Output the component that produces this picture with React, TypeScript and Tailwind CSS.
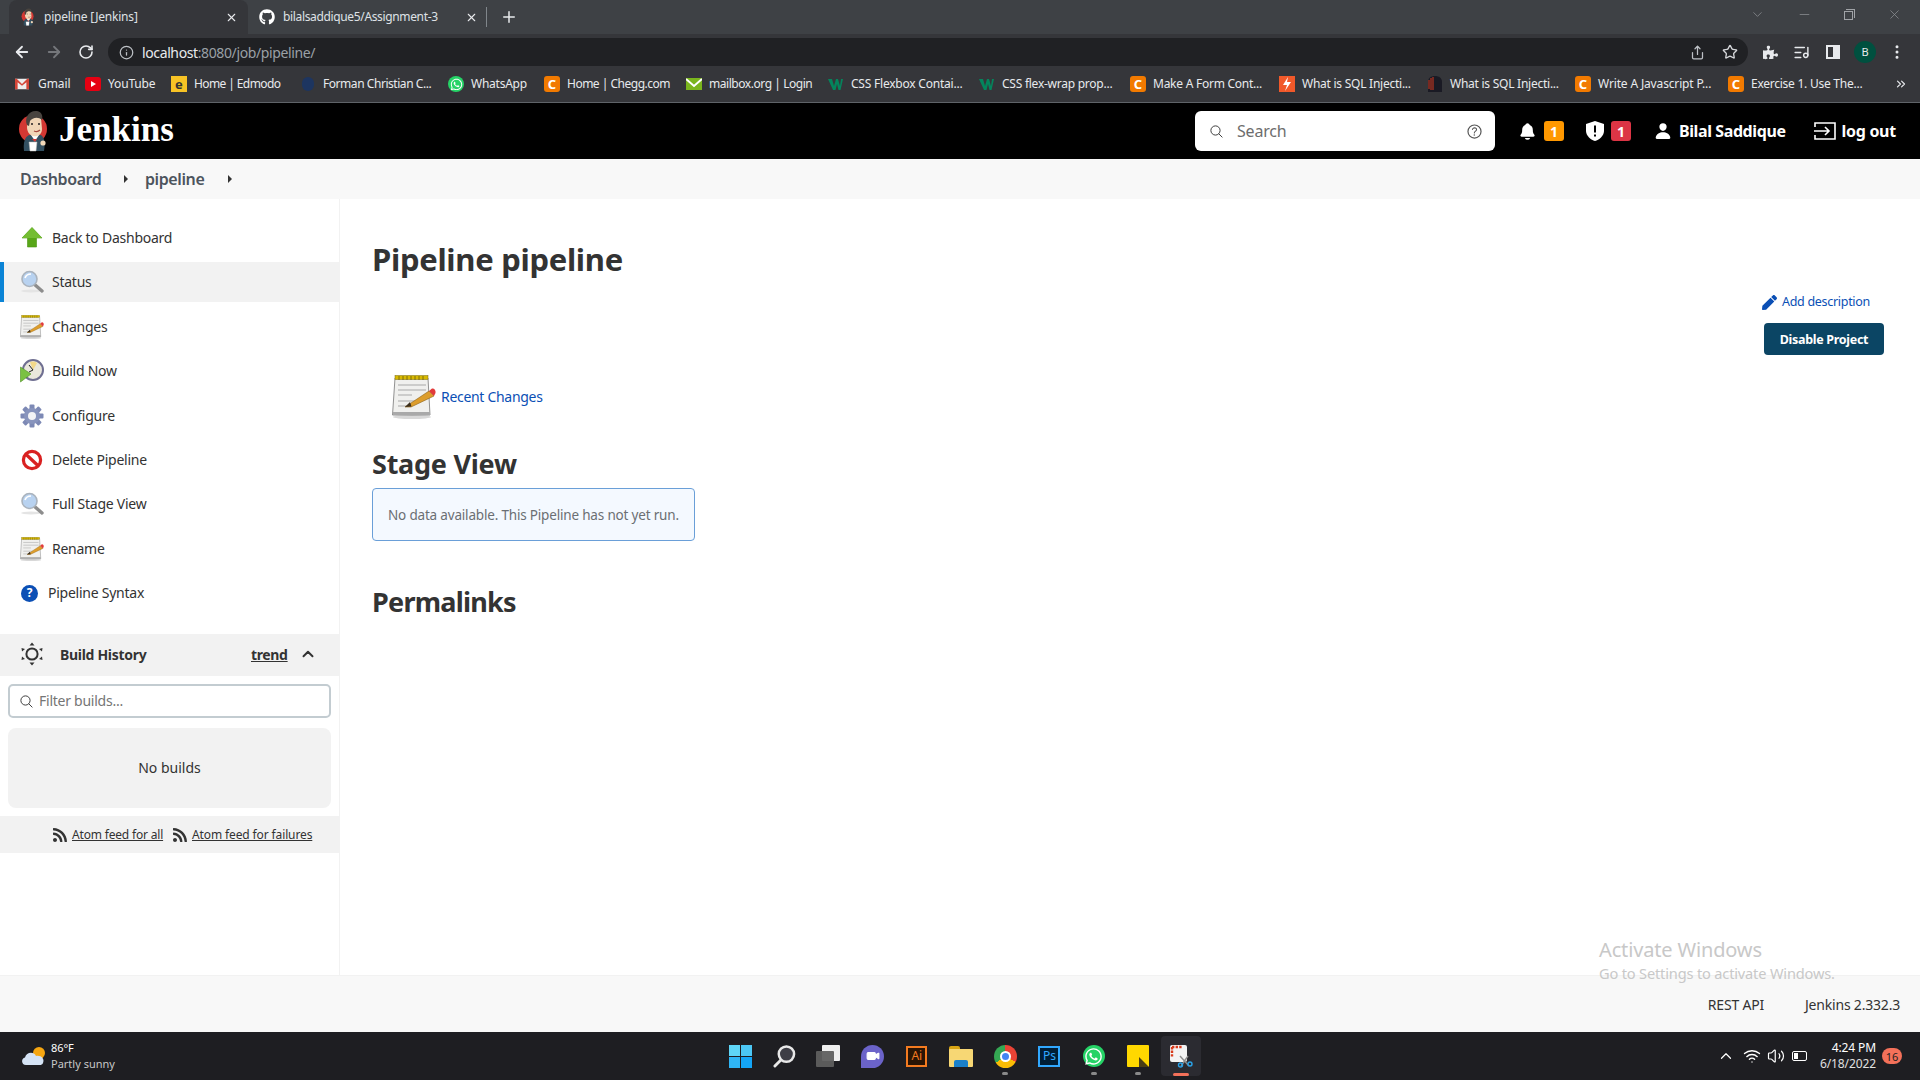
import React from 'react'
import { ArrowLeft, ArrowRight, RotateCw, Info, Share, Star, ListMusic, MoreVertical, X, Plus, ChevronDown, Minus, ChevronUp, Wifi, Volume2, ChevronsRight, Video } from 'lucide-react'
import { IoNotifications, IoPerson, IoSearchOutline, IoHelpCircleOutline } from 'react-icons/io5'
import { FaRss, FaGithub, FaPen, FaWhatsapp, FaPuzzlePiece } from 'react-icons/fa'

function JenkinsLogo({ className }: { className: string }) {
  return (
    <svg viewBox="0 0 32 42" className={className}>
      <circle cx="15" cy="19" r="14" fill="#d33833" />
      <path d="M6 41 C5 32 7 27 11 25 L23 25 C27 28 27 34 26 41 Z" fill="#335061" />
      <path d="M13 25 L17 31 L21 25 Z" fill="#fff" />
      <path d="M14 29 L19 29 L17 32 Z" fill="#d33833" />
      <path d="M10 9 C10 3 21 1 23 8 L24 19 C24 25 19 27 15 26 C11 25 9 21 9 17 Z" fill="#f0d6b7" />
      <path d="M9 15 C6 8 11 0 19 1 C24 2 25 6 24 10 C20 6 14 8 12 11 L11 16 Z" fill="#49443f" />
      <circle cx="14" cy="14" r="1" fill="#231f20" />
      <circle cx="21" cy="14" r="1" fill="#231f20" />
      <path d="M16 21 C18 22 20 22 22 20" stroke="#a5473e" strokeWidth="1.2" fill="none" />
      <path d="M11 32 L19 32 L18 41 L12 41 Z" fill="#fff" stroke="#b9b9b9" strokeWidth="0.5" />
      <circle cx="25" cy="33" r="2.6" fill="#f0d6b7" />
    </svg>
  )
}

function Notepad({ className }: { className: string }) {
  return (
    <svg viewBox="0 0 44 44" className={className}>
      <ellipse cx="20" cy="42" rx="19" ry="2" fill="#d8d8d8" />
      <path d="M3 3 H36 L38 40 H0.5 Z" fill="#f0f0ee" stroke="#777" strokeWidth="0.8" />
      <path d="M0.8 37 H38 V40 H0.8 Z" fill="#a9a9a9" />
      <rect x="3" y="0.5" width="33" height="4" fill="#d8b900" stroke="#7a6a10" strokeWidth="0.5" />
      <path d="M7 1V5M11 1V5M15 1V5M19 1V5M23 1V5M27 1V5M31 1V5" stroke="#6a5b08" strokeWidth="0.8" />
      <path d="M6 10H34M6 15H34M6 20H20M6 26H24M6 31H18" stroke="#a8a8a8" strokeWidth="1" />
      <path d="M13 32 L37 16 L42 21 L19 32 Z" fill="#dd9d2c" stroke="#8c5f14" strokeWidth="0.6" />
      <path d="M13 32 L18 27 L19.5 31.5 Z" fill="#3b2f1f" />
      <path d="M37 16 L40 13.5 C42 13 44 15 43.5 18 L42 21 Z" fill="#e23b3b" />
    </svg>
  )
}

function Magnifier() {
  return (
    <svg viewBox="0 0 24 24" className="h-[24px] w-[24px]">
      <ellipse cx="11" cy="21" rx="10" ry="1.5" fill="#e4e4e4" />
      <path d="M14 14 L22 21" stroke="#8d8d8d" strokeWidth="3.4" strokeLinecap="round" />
      <circle cx="9.5" cy="9" r="7.5" fill="#b8d2f0" stroke="#aab3bd" strokeWidth="1.6" />
      <path d="M5 8 C6 5 9 4 11 4" stroke="#fff" strokeWidth="1.6" fill="none" />
    </svg>
  )
}

function ClockPlay() {
  return (
    <svg viewBox="0 0 24 24" className="h-[24px] w-[24px]">
      <circle cx="13" cy="11" r="10" fill="#e9e7dc" stroke="#6f6f91" strokeWidth="2" />
      <path d="M13 11 L10 3 A8 8 0 0 1 17 4 Z" fill="#f3d98a" />
      <path d="M13 11 L9 6 M13 11 L9 13" stroke="#222" strokeWidth="1" />
      <path d="M0.5 8 L11 15 L0.5 23 Z" fill="#7ac142" stroke="#4e8f24" strokeWidth="0.6" />
    </svg>
  )
}

function Gear() {
  const angles = [0, 45, 90, 135, 180, 225, 270, 315]
  return (
    <svg viewBox="0 0 24 24" className="h-[24px] w-[24px]">
      {angles.map((a) => (
        <rect key={a} x="9.5" y="0.5" width="5" height="6" rx="1" fill="#7d89b5" transform={`rotate(${a} 12 12)`} />
      ))}
      <circle cx="12" cy="12" r="8" fill="#8894bd" />
      <circle cx="12" cy="12" r="4" fill="#f4f4f6" />
    </svg>
  )
}

function NoSign() {
  return (
    <svg viewBox="0 0 24 24" className="h-[24px] w-[24px]">
      <circle cx="12" cy="12" r="8.6" fill="#fff" stroke="#d92121" strokeWidth="3.2" />
      <path d="M5.6 6 L18.4 18" stroke="#d92121" strokeWidth="3.2" />
    </svg>
  )
}

function GreenUp() {
  return (
    <svg viewBox="0 0 24 24" className="h-[24px] w-[24px]">
      <path d="M12 1.5 L22 12 L16.5 12 L16.5 21 L7.5 21 L7.5 12 L2 12 Z" fill="#58a618" stroke="#4c9412" strokeWidth="0.6" />
      <path d="M12 1.5 L22 12 L2 12 Z" fill="#74bd33" />
    </svg>
  )
}

function BuildHistoryIcon() {
  return (
    <svg viewBox="0 0 24 24" className="h-[24px] w-[24px]">
      <circle cx="12" cy="12" r="5.6" fill="none" stroke="#333" strokeWidth="2" />
      <path d="M12 0.5 L14.5 3.5 H9.5 Z M12 23.5 L14.5 20.5 H9.5 Z M1.5 6 L5 7 L2 9.5 Z M22.5 6 L19 7 L22 9.5 Z M1.5 18 L5 17 L2 14.5 Z M22.5 18 L19 17 L22 14.5 Z" fill="#333" />
    </svg>
  )
}

const menu = [
  { label: 'Back to Dashboard', icon: <GreenUp /> },
  { label: 'Status', icon: <Magnifier />, active: true },
  { label: 'Changes', icon: <Notepad className="h-[24px] w-[24px]" /> },
  { label: 'Build Now', icon: <ClockPlay /> },
  { label: 'Configure', icon: <Gear /> },
  { label: 'Delete Pipeline', icon: <NoSign /> },
  { label: 'Full Stage View', icon: <Magnifier /> },
  { label: 'Rename', icon: <Notepad className="h-[24px] w-[24px]" /> },
]

function OrangeC() {
  return <span className="flex h-[16px] w-[16px] items-center justify-center rounded-[3px] bg-[#f27a00] text-[13px] leading-none font-bold text-white">C</span>
}

function W3() {
  return (
    <svg viewBox="0 0 16 16" className="h-[16px] w-[16px]">
      <path d="M0 3 H4 L6 10 L8 3 H10 L12 10 L13 3 H15 L12.5 14 H10.5 L9 8 L7.5 14 H5 Z" fill="#04845c" />
    </svg>
  )
}

const bookmarks = [
  {
    label: 'Gmail', w: 'w-[70px]', t: 'tracking-[-0.1px]', icon: (
      <svg viewBox="0 0 16 16" className="h-[14px] w-[14px]">
        <rect y="2" width="16" height="12" fill="#eee" />
        <path d="M0 2 H2 L8 8 L14 2 H16 V14 H13 V6 L8 10 L3 6 V14 H0 Z" fill="#d44638" />
      </svg>
    ),
  },
  { label: 'YouTube', w: 'w-[86px]', t: 'tracking-[-0.15px]', icon: <span className="flex h-[14px] w-[16px] items-center justify-center rounded-[3px] bg-[#e60012]"><span className="h-0 w-0 border-y-[3px] border-l-[5px] border-y-transparent border-l-white" /></span> },
  { label: 'Home | Edmodo', w: 'w-[129px]', t: 'tracking-[-0.6px]', icon: <span className="flex h-[16px] w-[16px] items-center justify-center bg-[#f7c325] text-[13px] leading-none font-bold text-[#333]">e</span> },
  { label: 'Forman Christian C...', w: 'w-[148px]', t: 'tracking-[-0.45px]', icon: <span className="ml-[2px] h-[14px] w-[12px] rounded-full bg-[#1d3560]" /> },
  { label: 'WhatsApp', w: 'w-[96px]', t: 'tracking-[-0.25px]', icon: <span className="flex h-[16px] w-[16px] items-center justify-center rounded-full bg-[#25d366] text-white"><FaWhatsapp size={13} /></span> },
  { label: 'Home | Chegg.com', w: 'w-[142px]', t: 'tracking-[-0.5px]', icon: <OrangeC /> },
  {
    label: 'mailbox.org | Login', w: 'w-[142px]', t: 'tracking-[-0.45px]', icon: (
      <svg viewBox="0 0 16 16" className="h-[16px] w-[16px]">
        <rect y="2" width="16" height="12" fill="#7ab51d" />
        <path d="M0 3 L8 10 L16 3" stroke="#fff" strokeWidth="2" fill="none" />
      </svg>
    ),
  },
  { label: 'CSS Flexbox Contai...', w: 'w-[151px]', t: 'tracking-[-0.22px]', icon: <W3 /> },
  { label: 'CSS flex-wrap prop...', w: 'w-[151px]', t: 'tracking-[-0.25px]', icon: <W3 /> },
  { label: 'Make A Form Cont...', w: 'w-[149px]', t: 'tracking-[-0.25px]', icon: <OrangeC /> },
  {
    label: 'What is SQL Injecti...', w: 'w-[148px]', t: 'tracking-[-0.25px]', icon: (
      <svg viewBox="0 0 16 16" className="h-[16px] w-[16px]">
        <rect width="16" height="16" fill="#f1592a" />
        <path d="M9 1 L4 9 H8 L6 15 L12 6 H8 Z" fill="#fff" />
      </svg>
    ),
  },
  {
    label: 'What is SQL Injecti...', w: 'w-[148px]', t: 'tracking-[-0.25px]', icon: (
      <svg viewBox="0 0 16 16" className="h-[16px] w-[16px]">
        <path d="M1 16 V6 C1 2 4 0 8 0 C12 0 15 2 15 6 V16 Z" fill="#1a1a24" />
        <path d="M2 4V13M4 2V14M6 1V14" stroke="#d5391f" strokeWidth="1" />
      </svg>
    ),
  },
  { label: 'Write A Javascript P...', w: 'w-[153px]', t: 'tracking-[-0.15px]', icon: <OrangeC /> },
  { label: 'Exercise 1. Use The...', w: 'w-[149px]', t: 'tracking-[-0.25px]', icon: <OrangeC /> },
]

function BrowserChrome() {
  return (
    <div className="bg-[#35363a] text-[#e8eaed]">
      <div className="flex h-[34px] items-center bg-[#3e4145] pl-[9px] text-[12px]">
        <div className="flex h-full w-[239px] items-center rounded-t-lg bg-[#35363a] pl-[12px]">
          <JenkinsLogo className="h-[18px] w-[14px]" />
          <span className="ml-[9px] tracking-[-0.2px] text-[#dfe1e5]">pipeline [Jenkins]</span>
          <X size={13} className="ml-auto mr-[10px]" />
        </div>
        <FaGithub size={16} className="ml-[11px] text-white" />
        <span className="ml-[8px] w-[182px] tracking-[-0.35px] text-[#dfe1e5]">bilalsaddique5/Assignment-3</span>
        <X size={13} />
        <span className="ml-[8px] h-[20px] w-px bg-[#80868b]" />
        <Plus size={18} className="ml-[13px]" />
        <div className="ml-auto mr-[18px] flex items-center gap-[32px] pb-[6px] text-[#8d9094]">
          <ChevronDown size={15} strokeWidth={1.2} />
          <Minus size={15} strokeWidth={1.2} />
          <span className="relative h-[11px] w-[11px]">
            <span className="absolute bottom-0 left-0 h-[9px] w-[9px] border border-[#a0a3a7]" />
            <span className="absolute right-0 top-0 h-[9px] w-[9px] border-t border-r border-[#a0a3a7]" />
          </span>
          <X size={15} strokeWidth={1.2} />
        </div>
      </div>
      <div className="flex h-[32px] items-end">
        <div className="flex h-[28px] w-[108px] items-center pl-[13px]">
          <ArrowLeft size={18} strokeWidth={2.4} />
          <ArrowRight size={18} strokeWidth={2.4} className="ml-[14px] text-[#75777b]" />
          <RotateCw size={16} strokeWidth={2.4} className="ml-[15px]" />
        </div>
        <div className="flex h-[28px] w-[1640px] items-center rounded-full bg-[#202124] pl-[11px] text-[14px]">
          <Info size={15} className="text-[#bdc1c6]" />
          <span className="ml-[8px] tracking-[-0.38px]">localhost<span className="text-[#9aa0a6]">:8080/job/pipeline/</span></span>
          <Share size={15} className="ml-auto text-[#bdc1c6]" />
          <Star size={16} className="ml-[17px] mr-[10px] text-[#d5d7da]" />
        </div>
        <div className="flex h-[28px] flex-1 items-center pl-[15px]">
          <FaPuzzlePiece size={15} className="text-[#e8eaed]" />
          <ListMusic size={17} className="ml-[15px]" />
          <span className="ml-[16px] flex h-[14px] w-[14px] border-2 border-[#e8eaed]"><span className="ml-auto h-full w-[5px] bg-[#e8eaed]" /></span>
          <span className="ml-[14px] flex h-[22px] w-[22px] items-center justify-center rounded-full bg-[#00503f] text-[11px]">B</span>
          <MoreVertical size={18} className="ml-[12px]" />
        </div>
      </div>
      <div className="flex h-[37px] items-center border-b border-[#5f6368] pl-[15px] text-[12px]">
        {bookmarks.map((b, i) => (
          <div key={i} className={`flex shrink-0 items-center ${b.w}`}>
            <span className="flex w-[23px] shrink-0">{b.icon}</span>
            <span className={`whitespace-nowrap ${b.t}`}>{b.label}</span>
          </div>
        ))}
        <ChevronsRight size={14} className="ml-[17px]" />
      </div>
    </div>
  )
}

function JenkinsHeader() {
  return (
    <header className="flex h-[56px] items-center bg-black pl-[18px] text-white">
      <JenkinsLogo className="h-[42px] w-[32px]" />
      <span className="ml-[9px] w-[115px] pb-[3px] font-['Liberation_Serif',serif] text-[35px] leading-none font-bold whitespace-nowrap">Jenkins</span>
      <div className="ml-[1021px] flex h-[40px] w-[300px] items-center rounded-md bg-white pl-[14px] pr-[11px] text-[#6d6d6d]">
        <IoSearchOutline size={15} className="text-[#333]" />
        <span className="ml-[13px] text-[16px] tracking-[-0.2px]">Search</span>
        <IoHelpCircleOutline size={19} className="ml-auto text-[#555]" />
      </div>
      <IoNotifications size={19} className="ml-[23px]" />
      <span className="ml-[7px] flex h-[20px] w-[20px] items-center justify-center rounded-[3px] bg-[#ff9800] text-[14px] font-bold">1</span>
      <svg viewBox="0 0 18 20" className="ml-[22px] h-[20px] w-[18px]">
        <path d="M9 0 L18 3 V10 C18 15 13 19 9 20 C5 19 0 15 0 10 V3 Z" fill="#fff" />
        <path d="M8 4.5 H10 V11.5 H8 Z M8 13.5 H10 V15.5 H8 Z" fill="#000" />
      </svg>
      <span className="ml-[7px] flex h-[20px] w-[20px] items-center justify-center rounded-[3px] bg-[#dc3545] text-[14px] font-bold">1</span>
      <IoPerson size={18} className="ml-[23px]" />
      <span className="ml-[7px] text-[16px] font-bold tracking-[-0.4px] whitespace-nowrap">Bilal Saddique</span>
      <svg viewBox="0 0 22 18" className="ml-[28px] h-[18px] w-[22px]" fill="none" stroke="#fff" strokeWidth="1.6">
        <path d="M1 5 V1 H21 V17 H1 V13" />
        <path d="M0 9 H15 M11 5 L15 9 L11 13" />
      </svg>
      <span className="ml-[6px] text-[16px] font-bold tracking-[-0.3px] whitespace-nowrap">log out</span>
    </header>
  )
}

function Breadcrumb() {
  return (
    <nav className="flex h-[40px] items-center bg-[#f8f8f8] pl-[20px] text-[16px] font-semibold tracking-[-0.4px] text-[#4d545d]">
      <span className="w-[104px]">Dashboard</span>
      <span className="h-0 w-0 border-y-[4px] border-l-[4px] border-y-transparent border-l-[#333]" />
      <span className="ml-[17px] w-[83px]">pipeline</span>
      <span className="h-0 w-0 border-y-[4px] border-l-[4px] border-y-transparent border-l-[#333]" />
    </nav>
  )
}

function Sidebar() {
  return (
    <aside className="w-[340px] shrink-0 border-r border-[#f2f2f2] pt-[19px] text-[14px] text-[#333]">
      <div className="flex flex-col gap-[4.4px]">
        {menu.map((m) => (
          <div key={m.label} className={`flex h-[40px] items-center ${m.active ? 'border-l-4 border-[#0b84d6] bg-[#f2f2f2] pl-[16px]' : 'pl-[20px]'}`}>
            <span className="w-[32px] shrink-0">{m.icon}</span>
            <span className="pb-px tracking-[-0.25px]">{m.label}</span>
          </div>
        ))}
        <div className="flex h-[40px] items-center pl-[21px]">
          <span className="flex h-[17px] w-[17px] items-center justify-center rounded-full bg-[#0b4fb5] text-[12px] leading-none font-bold text-white">?</span>
          <span className="ml-[10px] pb-px tracking-[-0.25px]">Pipeline Syntax</span>
        </div>
      </div>
      <div className="mt-[21px] flex h-[42px] items-center bg-[#f2f2f2] pb-[2px] pl-[20px] font-bold">
        <BuildHistoryIcon />
        <span className="ml-[16px] w-[191px] tracking-[-0.3px]">Build History</span>
        <span className="underline tracking-[-0.35px]">trend</span>
        <ChevronUp size={18} strokeWidth={2.6} className="ml-[11px]" />
      </div>
      <div className="mx-[8px] mt-[8px] flex h-[34px] items-center rounded-[5px] border-2 border-[#c3ccd1] pl-[9px] text-[#757575]">
        <IoSearchOutline size={15} className="text-[#333]" />
        <span className="ml-[5px] pb-px tracking-[-0.25px]">Filter builds...</span>
      </div>
      <div className="mx-[8px] mt-[10px] flex h-[80px] items-center justify-center rounded-lg bg-[#f2f2f2] pb-px">No builds</div>
      <div className="mt-[8px] flex h-[37px] items-center bg-[#f2f2f2] pl-[52px] text-[12px]">
        <FaRss size={16} />
        <span className="ml-[4px] w-[100px] underline tracking-[-0.18px] whitespace-nowrap">Atom feed for all</span>
        <FaRss size={16} />
        <span className="ml-[4px] underline tracking-[-0.12px] whitespace-nowrap">Atom feed for failures</span>
      </div>
    </aside>
  )
}

function Content() {
  return (
    <main className="flex flex-1 pl-[32px] pr-[36px] text-[#333]">
      <div className="flex-1">
        <h1 className="mt-[38px] h-[44px] text-[31px] leading-[44px] font-bold tracking-[-0.3px]">Pipeline pipeline</h1>
        <div className="mt-[94px] ml-[20px] flex h-[44px] items-center">
          <Notepad className="h-[44px] w-[44px]" />
          <span className="ml-[5px] pb-px text-[14px] tracking-[-0.3px] text-[#0b4fb5]">Recent Changes</span>
        </div>
        <h2 className="mt-[26px] h-[38px] text-[27px] leading-[38px] font-bold tracking-[-0.25px]">Stage View</h2>
        <div className="mt-[5px] flex h-[53px] w-[323px] items-center rounded border border-[#6a9fd8] bg-[#f4f9ff] pl-[15px] pt-px text-[13.5px] tracking-[-0.18px] text-[#6b6f73]">
          No data available. This Pipeline has not yet run.
        </div>
        <h2 className="mt-[42px] h-[38px] text-[27px] leading-[38px] font-bold tracking-[-0.75px]">Permalinks</h2>
      </div>
      <div className="flex flex-col items-end pt-[92px]">
        <div className="mr-[14px] flex h-[22px] items-center text-[12.5px] tracking-[-0.3px] text-[#0b4fb5]">
          <FaPen size={15} className="mr-[5px]" />
          Add description
        </div>
        <button className="mt-[10px] h-[32px] w-[120px] rounded bg-[#0b4564] pt-[2px] text-[12.5px] font-bold tracking-[-0.3px] text-white">Disable Project</button>
      </div>
    </main>
  )
}

function Footer() {
  return (
    <footer className="flex h-[57px] items-center justify-end border-t border-[#f2f2f2] bg-[#f8f8f8] pr-[20px] text-[14px] tracking-[-0.2px] text-[#333]">
      <span>REST API</span>
      <span className="ml-[41px]">Jenkins 2.332.3</span>
    </footer>
  )
}

function TaskIconSlot({ children, dot }: { children: React.ReactNode; dot?: boolean }) {
  return (
    <div className="relative flex h-[48px] w-[44.2px] items-center justify-center">
      {children}
      {dot && <span className="absolute bottom-[5px] h-[3px] w-[6px] rounded-full bg-[#8a8a8a]" />}
    </div>
  )
}

function Taskbar() {
  return (
    <div className="flex h-[48px] items-center bg-[#1e1e22] text-white">
      <div className="flex w-[718px] shrink-0 items-center pl-[21px]">
        <svg viewBox="0 0 24 18" className="h-[18px] w-[24px]">
          <circle cx="18" cy="6" r="6" fill="#f6a611" />
          <path d="M5 18 C0 18 0 11 4 10.5 C5 5 13 4 15 9 C20 8 24 12 22 16 C21.5 17.5 20 18 19 18 Z" fill="#d5e3f5" />
        </svg>
        <div className="ml-[6px] text-[11px] leading-[16px]">
          <div className="tracking-[-0.1px]">86°F</div>
          <div className="text-[#c8c8c8]">Partly sunny</div>
        </div>
      </div>
      <div className="flex items-center">
        <TaskIconSlot>
          <div className="grid h-[23px] w-[23px] grid-cols-2 gap-[1px]">
            <span className="bg-[#5fd6f7]" />
            <span className="bg-[#4cc7f5]" />
            <span className="bg-[#2fb5f5]" />
            <span className="bg-[#14a5f7]" />
          </div>
        </TaskIconSlot>
        <TaskIconSlot>
          <svg viewBox="0 0 24 24" className="h-[23px] w-[23px]">
            <circle cx="14" cy="9.5" r="8" fill="#3d3d45" stroke="#e8e8e8" strokeWidth="2.6" />
            <path d="M8 16 L2 22" stroke="#e8e8e8" strokeWidth="3" strokeLinecap="round" />
          </svg>
        </TaskIconSlot>
        <TaskIconSlot>
          <div className="relative h-[22px] w-[24px]">
            <span className="absolute right-0 top-0 h-[16px] w-[18px] rounded-[1px] bg-[#efefef]" />
            <span className="absolute bottom-0 left-0 h-[16px] w-[18px] rounded-[1px] bg-[#5f5f5f]/95" />
          </div>
        </TaskIconSlot>
        <TaskIconSlot>
          <span className="flex h-[23px] w-[23px] items-center justify-center rounded-full rounded-bl-sm bg-[#6b63c9]"><Video size={14} fill="#fff" stroke="#fff" /></span>
        </TaskIconSlot>
        <TaskIconSlot>
          <span className="flex h-[21px] w-[21px] items-center justify-center border-2 border-[#f47b20] bg-[#2a1505] text-[12px] leading-none text-[#f47b20]">Ai</span>
        </TaskIconSlot>
        <TaskIconSlot>
          <div className="relative h-[21px] w-[24px]">
            <span className="absolute left-0 top-0 h-[8px] w-[11px] rounded-t-[2px] bg-[#d9a514]" />
            <span className="absolute bottom-0 left-0 h-[18px] w-[24px] rounded-[1px] bg-[#f7d774]" />
            <span className="absolute bottom-0 left-[5px] h-[7px] w-[14px] rounded-t-[2px] bg-[#1b80c9]" />
          </div>
        </TaskIconSlot>
        <TaskIconSlot dot>
          <span className="flex h-[23px] w-[23px] items-center justify-center rounded-full bg-[conic-gradient(#ea4335_0_33%,#fbbc05_33%_66%,#34a853_66%)]">
            <span className="h-[11px] w-[11px] rounded-full border-2 border-white bg-[#4285f4]" />
          </span>
        </TaskIconSlot>
        <TaskIconSlot>
          <span className="flex h-[21px] w-[22px] items-center justify-center border-2 border-[#31a8ff] bg-[#001e36] text-[12px] leading-none text-[#31a8ff]">Ps</span>
        </TaskIconSlot>
        <TaskIconSlot dot>
          <span className="flex h-[22px] w-[22px] items-center justify-center rounded-full bg-[#25d366] text-white"><FaWhatsapp size={19} /></span>
        </TaskIconSlot>
        <TaskIconSlot dot>
          <div className="relative h-[22px] w-[22px] rounded-[1px] bg-[#ffd800]">
            <span className="absolute bottom-0 right-0 h-0 w-0 border-t-[10px] border-l-[10px] border-t-transparent border-l-[#4a3e14]" />
          </div>
        </TaskIconSlot>
        <div className="relative ml-[1px] flex h-[40px] w-[40px] items-center justify-center rounded-[4px] bg-[#2b2b31]">
          <svg viewBox="0 0 24 24" className="h-[24px] w-[24px]">
            <rect x="1" y="1" width="17" height="17" rx="2" fill="#f3f3f3" />
            <path d="M3 3H13M3 3V13" stroke="#d83b1c" strokeWidth="2.4" strokeDasharray="2.4 1.2" />
            <path d="M11 12 L20 22 M19 12 L12 22" stroke="#8d8d8d" strokeWidth="1.4" />
            <circle cx="11.5" cy="21" r="2" fill="none" stroke="#2aa2e8" strokeWidth="1.4" />
            <circle cx="21" cy="20" r="2" fill="none" stroke="#2aa2e8" strokeWidth="1.4" />
          </svg>
          <span className="absolute bottom-0 h-[3px] w-[16px] rounded-full bg-[#f4715a]" />
        </div>
      </div>
      <div className="ml-auto flex items-center pr-[18px]">
        <ChevronUp size={18} strokeWidth={1.6} className="-ml-[2px]" />
        <Wifi size={18} strokeWidth={1.8} className="ml-[8px]" />
        <Volume2 size={18} strokeWidth={1.6} className="ml-[6px]" />
        <span className="ml-[7px] flex h-[10px] w-[15px] rounded-[2px] border border-white p-[1px]"><span className="h-full w-[4px] bg-white" /></span>
        <div className="ml-[1px] w-[68px] text-right text-[12px] leading-[16px] tracking-[-0.1px]">
          <div>4:24 PM</div>
          <div className="text-[#e0e0e0]">6/18/2022</div>
        </div>
        <span className="ml-[6px] flex h-[16px] w-[20px] items-center justify-center rounded-full bg-[#f4715a] text-[11px] leading-none text-[#222]">16</span>
      </div>
    </div>
  )
}

export default function App() {
  return (
    <div className="relative flex h-[1080px] w-[1920px] flex-col overflow-hidden bg-white font-['Noto_Sans','Open_Sans',sans-serif]">
      <BrowserChrome />
      <JenkinsHeader />
      <Breadcrumb />
      <div className="flex min-h-0 flex-1">
        <Sidebar />
        <Content />
      </div>
      <Footer />
      <Taskbar />
      <div className="pointer-events-none absolute left-[1599px] top-[936px] text-[#c8c8c8]">
        <div className="text-[20px] leading-[28px] tracking-[-0.15px]">Activate Windows</div>
        <div className="text-[14.6px] leading-[18px] tracking-[-0.17px]">Go to Settings to activate Windows.</div>
      </div>
    </div>
  )
}
